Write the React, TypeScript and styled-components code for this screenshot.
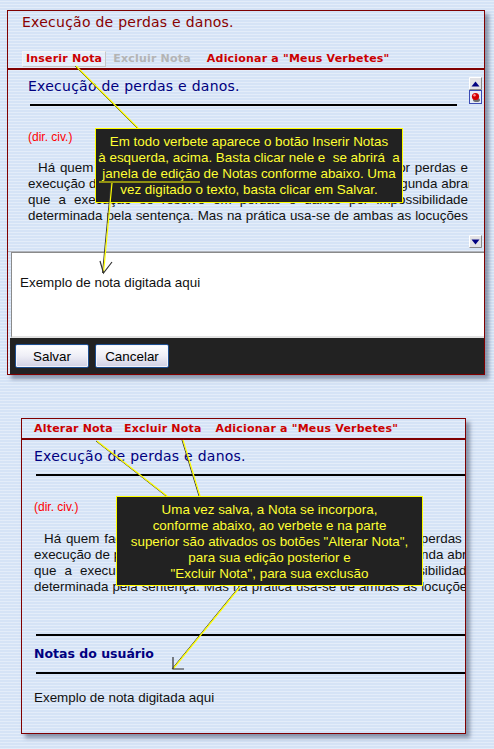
import React from 'react';
import styled, { createGlobalStyle } from 'styled-components';

const GlobalStyle = createGlobalStyle`
  html, body {
    margin: 0;
    padding: 0;
  }
  body {
    background-color: #d5e3f6;
    background-image: repeating-linear-gradient(0deg, rgba(255, 255, 255, 0.35) 0 1px, transparent 1px 3px);
    font-family: "Liberation Sans", Arial, sans-serif;
  }
`;

const Page = styled.div`
  position: relative;
  width: 494px;
  height: 749px;
  overflow: hidden;
  padding-top: 10px;
  box-sizing: border-box;
`;

const Panel = styled.div<{ $top: number; $left: number; $width: number; $height: number }>`
  margin: ${p => p.$top}px 0 0 ${p => p.$left}px;
  width: ${p => p.$width}px;
  height: ${p => p.$height}px;
  box-sizing: border-box;
  border: 1px solid #800000;
  box-shadow: 4px 4px 4px rgba(70, 80, 105, 0.55);
  display: flex;
  flex-direction: column;
  overflow: hidden;
`;

const Header = styled.div`
  height: 57px;
  padding: 3px 0 0 14px;
  box-sizing: border-box;
  display: flex;
  flex-direction: column;
`;

const EntryTitle = styled.div<{ $color: string; $bold?: boolean; $top?: number }>`
  font-family: "DejaVu Sans", Verdana, sans-serif;
  font-size: ${p => (p.$bold ? '12.5px' : '14px')};
  letter-spacing: ${p => (p.$bold ? '0' : '0.25px')};
  line-height: 16px;
  font-weight: ${p => (p.$bold ? 'bold' : 'normal')};
  color: ${p => p.$color};
  white-space: nowrap;
  margin-top: ${p => p.$top ?? 0}px;
`;

const Toolbar = styled.div<{ $height?: number; $pad?: number }>`
  display: flex;
  align-items: center;
  gap: 3px;
  ${p => (p.$height ? `height: ${p.$height}px; padding-left: ${p.$pad}px;` : 'margin-top: 21px;')}
`;

const ToolButton = styled.span<{ $disabled?: boolean; $boxed?: boolean; $extra?: number }>`
  font-family: "DejaVu Sans", Verdana, sans-serif;
  font-size: 11px;
  font-weight: bold;
  letter-spacing: 0.2px;
  line-height: 14px;
  padding: 0 3px;
  white-space: nowrap;
  color: ${p => (p.$disabled ? '#b4b4b4' : '#cc0000')};
  border: 1px solid ${p => (p.$boxed ? '#f4f4f4' : 'transparent')};
  border-right-color: ${p => (p.$boxed ? '#c8c8c8' : 'transparent')};
  border-bottom-color: ${p => (p.$boxed ? '#c8c8c8' : 'transparent')};
  background: ${p => (p.$boxed ? 'rgba(255, 255, 255, 0.35)' : 'transparent')};
  margin-left: ${p => p.$extra ?? 0}px;
`;

const RedRule = styled.div`
  height: 2px;
  background: #800000;
  flex: none;
`;

const Viewer = styled.div`
  height: 181px;
  display: flex;
  flex: none;
  border-bottom: 1px solid #b0b4bc;
`;

const Content = styled.div<{ $pad: number; $top: number }>`
  flex: 1;
  min-width: 0;
  overflow: hidden;
  padding: ${p => p.$top}px 0 0 ${p => p.$pad}px;
`;

const BlackRule = styled.div<{ $top: number; $width?: number }>`
  height: 2px;
  background: #000;
  margin: ${p => p.$top}px 0 0 2px;
  width: ${p => (p.$width ? `${p.$width}px` : 'auto')};
`;

const Subject = styled.div<{ $top: number }>`
  margin-top: ${p => p.$top}px;
  font-size: 12px;
  line-height: 14px;
  color: #ff0000;
`;

const NoteText = styled.div<{ $top: number }>`
  margin-top: ${p => p.$top}px;
  font-size: 13.4px;
  line-height: 16px;
  color: #111;
`;

const Paragraph = styled.div<{ $top: number }>`
  margin-top: ${p => p.$top}px;
  width: 440px;
  font-size: 13.4px;
  line-height: 16px;
  color: #111;
`;

const Line = styled.div<{ $indent?: boolean }>`
  white-space: nowrap;
  text-align: justify;
  text-align-last: justify;
  text-indent: ${p => (p.$indent ? '10px' : '0')};
`;

const ScrollColumn = styled.div`
  width: 13px;
  margin-right: 2px;
  padding: 7px 0 3px;
  display: flex;
  flex-direction: column;
  justify-content: space-between;
`;

const ScrollTop = styled.div`
  display: flex;
  flex-direction: column;
`;

const NoteBox = styled.div`
  height: 86px;
  flex: none;
  margin-left: 3px;
  box-sizing: border-box;
  background: #fff;
  border-top: 1px solid #8a8a8a;
  border-left: 1px solid #8a8a8a;
  border-bottom: 2px solid #e2e2e2;
  padding: 22px 0 0 8px;
  font-size: 13.4px;
  line-height: 16px;
  color: #111;
`;

const ButtonBar = styled.div`
  flex: 1;
  margin-left: 2px;
  background: #222222;
  display: flex;
  align-items: flex-start;
  gap: 6px;
  padding: 6px 5px 0;
`;

const FormButton = styled.button`
  width: 74px;
  height: 24px;
  padding: 0;
  border: 1px solid #1d4e8f;
  border-radius: 2px;
  box-shadow: inset 0 0 0 1px #f4f4fa;
  background: linear-gradient(#ffffff 0%, #eeeef6 50%, #d0d0e4 100%);
  font-family: "Liberation Sans", Arial, sans-serif;
  font-size: 13.4px;
  color: #000;
`;

const Tooltip = styled.div<{ $x: number; $y: number; $w: number; $h: number }>`
  position: absolute;
  left: ${p => p.$x}px;
  top: ${p => p.$y}px;
  width: ${p => p.$w}px;
  height: ${p => p.$h}px;
  box-sizing: border-box;
  background: #222222;
  border: 1px solid #ffff00;
  padding-top: 5px;
  text-align: center;
  font-size: 13.4px;
  line-height: 16px;
  color: #ffff33;
  white-space: nowrap;
`;

const Overlay = styled.svg`
  position: absolute;
  left: 0;
  top: 0;
  pointer-events: none;
`;

const lines = [
  'Há quem faça uma distinção entre as locuções execução por perdas e',
  'execução de perdas e danos, por entenderem alguns que a segunda abrange o caso',
  'que a execução se resolve em perdas e danos por impossibilidade',
  'determinada pela sentença. Mas na prática usa-se de ambas as locuções',
];

const Body = ({ top }: { top: number }) => (
  <Paragraph $top={top}>
    {lines.map((l, i) => (
      <Line key={i} $indent={i === 0}>{l}</Line>
    ))}
  </Paragraph>
);

const UpButton = () => (
  <svg width="13" height="13" viewBox="0 0 13 13">
    <rect x="0" y="0" width="13" height="13" fill="#e2e2e6" />
    <path d="M0.5 12.5V0.5H12.5" stroke="#ffffff" fill="none" />
    <path d="M0.5 12.5H12.5V0.5" stroke="#8a8a8a" fill="none" />
    <path d="M2.5 9.5H10.5L6.5 4.5Z" fill="#000080" />
  </svg>
);

const DownButton = () => (
  <svg width="13" height="13" viewBox="0 0 13 13">
    <rect x="0" y="0" width="13" height="13" fill="#e2e2e6" />
    <path d="M0.5 12.5V0.5H12.5" stroke="#ffffff" fill="none" />
    <path d="M0.5 12.5H12.5V0.5" stroke="#8a8a8a" fill="none" />
    <path d="M2.5 4.5H10.5L6.5 9.5Z" fill="#000080" />
  </svg>
);

const Thumb = () => (
  <svg width="13" height="14" viewBox="0 0 13 14">
    <rect x="0.5" y="0.5" width="12" height="13" fill="#e6ecf8" stroke="#3c4cb4" />
    <ellipse cx="7.5" cy="10" rx="3.5" ry="2" fill="#707070" />
    <circle cx="6.5" cy="6.5" r="3.6" fill="#d40000" />
    <circle cx="5.5" cy="5.3" r="1.2" fill="#ff9090" />
  </svg>
);

const Pointer = ({ x1, y1, x2, y2 }: { x1: number; y1: number; x2: number; y2: number }) => (
  <g>
    <line x1={x1 - 1} y1={y1} x2={x2 - 1} y2={y2} stroke="#3a3a3a" strokeWidth="1" />
    <line x1={x1} y1={y1} x2={x2} y2={y2} stroke="#ffff00" strokeWidth="1.2" />
  </g>
);

export default function App() {
  return (
    <>
      <GlobalStyle />
      <Page>
        <Panel $top={0} $left={7} $width={478} $height={365}>
          <Header>
            <EntryTitle $color="#880000">Execução de perdas e danos.</EntryTitle>
            <Toolbar>
              <ToolButton $boxed>Inserir Nota</ToolButton>
              <ToolButton $disabled>Excluir Nota</ToolButton>
              <ToolButton $extra={5}>Adicionar a "Meus Verbetes"</ToolButton>
            </Toolbar>
          </Header>
          <RedRule />
          <Viewer>
            <Content $pad={20} $top={8}>
              <EntryTitle $color="#000080">Execução de perdas e danos.</EntryTitle>
              <BlackRule $top={10} $width={427} />
              <Subject $top={24}>(dir. civ.)</Subject>
              <Body top={16} />
            </Content>
            <ScrollColumn>
              <ScrollTop>
                <UpButton />
                <Thumb />
              </ScrollTop>
              <DownButton />
            </ScrollColumn>
          </Viewer>
          <NoteBox>Exemplo de nota digitada aqui</NoteBox>
          <ButtonBar>
            <FormButton>Salvar</FormButton>
            <FormButton>Cancelar</FormButton>
          </ButtonBar>
        </Panel>

        <Panel $top={43} $left={21} $width={445} $height={316}>
          <Toolbar $height={19} $pad={8}>
            <ToolButton>Alterar Nota</ToolButton>
            <ToolButton>Excluir Nota</ToolButton>
            <ToolButton $extra={3}>Adicionar a "Meus Verbetes"</ToolButton>
          </Toolbar>
          <RedRule />
          <Content $pad={12} $top={8}>
            <EntryTitle $color="#000080">Execução de perdas e danos.</EntryTitle>
            <BlackRule $top={10} />
            <Subject $top={24}>(dir. civ.)</Subject>
            <Body top={17} />
            <BlackRule $top={39} />
            <EntryTitle $color="#000080" $bold $top={10}>Notas do usuário</EntryTitle>
            <BlackRule $top={10} />
            <NoteText $top={16}>Exemplo de nota digitada aqui</NoteText>
          </Content>
        </Panel>

        <Tooltip $x={95} $y={128} $w={308} $h={75}>
          Em todo verbete aparece o botão Inserir Notas
          <br />à esquerda, acima. Basta clicar nele e&nbsp; se abrirá&nbsp; a
          <br />janela de edição de Notas conforme abaixo. Uma
          <br />vez digitado o texto, basta clicar em Salvar.
        </Tooltip>

        <Tooltip $x={116} $y={496} $w={307} $h={90}>
          Uma vez salva, a Nota se incorpora,
          <br />conforme abaixo, ao verbete e na parte
          <br />superior são ativados os botões "Alterar Nota",
          <br />para sua edição posterior e
          <br />"Excluir Nota", para sua exclusão
        </Tooltip>

        <Overlay width="494" height="749" viewBox="0 0 494 749">
          <Pointer x1={76} y1={66} x2={138} y2={128} />
          <line x1={99} y1={182} x2={200} y2={182} stroke="#ffff00" strokeWidth="1" />
          <Pointer x1={112} y1={183} x2={103.5} y2={273} />
          <path d="M100 261L103.5 273L112 262" stroke="#333" strokeWidth="1.2" fill="none" />
          <Pointer x1={97} y1={441} x2={167} y2={496} />
          <Pointer x1={183} y1={440} x2={200} y2={496} />
          <Pointer x1={240} y1={587} x2={173} y2={669} />
          <path d="M173 657L173 669L184 669" stroke="#333" strokeWidth="1.2" fill="none" />
        </Overlay>
      </Page>
    </>
  );
}
